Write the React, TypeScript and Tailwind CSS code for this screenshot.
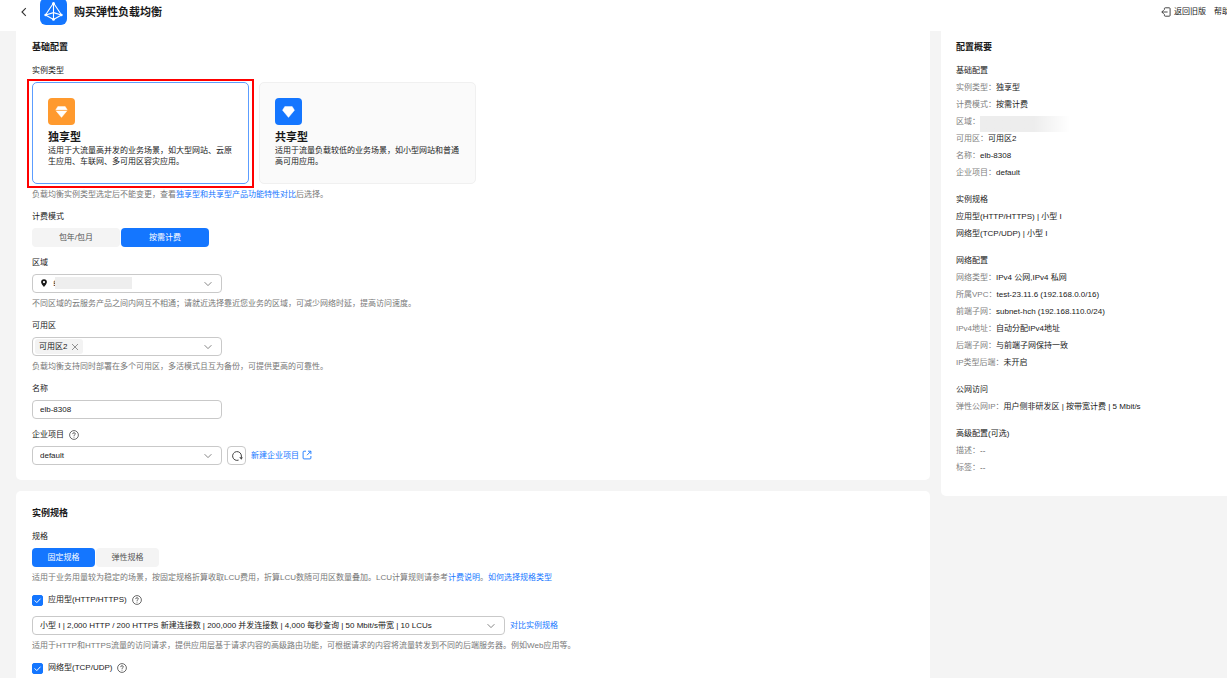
import { useState } from 'react'
import type { ReactNode } from 'react'
import clsx from 'clsx'

type InstanceType = 'dedicated' | 'shared'

const instanceTypes: { id: InstanceType; name: string; description: string }[] = [
  {
    id: 'dedicated',
    name: '独享型',
    description: '适用于大流量高并发的业务场景，如大型网站、云原生应用、车联网、多可用区容灾应用。',
  },
  {
    id: 'shared',
    name: '共享型',
    description: '适用于流量负载较低的业务场景，如小型网站和普通高可用应用。',
  },
]

const summary: { title: string; rows: { label?: string; value: string; masked?: boolean }[] }[] = [
  {
    title: '基础配置',
    rows: [
      { label: '实例类型', value: '独享型' },
      { label: '计费模式', value: '按需计费' },
      { label: '区域', value: '', masked: true },
      { label: '可用区', value: '可用区2' },
      { label: '名称', value: 'elb-8308' },
      { label: '企业项目', value: 'default' },
    ],
  },
  {
    title: '实例规格',
    rows: [{ value: '应用型(HTTP/HTTPS) | 小型 I' }, { value: '网络型(TCP/UDP) | 小型 I' }],
  },
  {
    title: '网络配置',
    rows: [
      { label: '网络类型', value: 'IPv4 公网,IPv4 私网' },
      { label: '所属VPC', value: 'test-23.11.6 (192.168.0.0/16)' },
      { label: '前端子网', value: 'subnet-hch (192.168.110.0/24)' },
      { label: 'IPv4地址', value: '自动分配IPv4地址' },
      { label: '后端子网', value: '与前端子网保持一致' },
      { label: 'IP类型后端', value: '未开启' },
    ],
  },
  {
    title: '公网访问',
    rows: [{ label: '弹性公网IP', value: '用户侧非研发区 | 按带宽计费 | 5 Mbit/s' }],
  },
  {
    title: '高级配置(可选)',
    rows: [
      { label: '描述', value: '--' },
      { label: '标签', value: '--' },
    ],
  },
]

export default function App() {
  const [type, setType] = useState<InstanceType>('dedicated')
  const [billing, setBilling] = useState('按需计费')
  const [spec, setSpec] = useState('固定规格')
  const [zones, setZones] = useState(['可用区2'])
  const [name, setName] = useState('elb-8308')

  return (
    <div className="flex min-h-screen flex-col overflow-hidden bg-[#f4f4f4] font-['Liberation_Sans','Noto_Sans_CJK_SC',sans-serif] text-[8px] leading-3 text-[#191919]">
      <header className="-mt-0.5 flex items-center bg-white pb-1.5 pl-5">
        <button aria-label="返回" className="mr-3">
          <svg viewBox="0 0 8 10" className="h-2.5 w-2" fill="none" stroke="#333" strokeWidth="1.1">
            <path d="M5.8 1.2 2 5l3.8 3.8" />
          </svg>
        </button>
        <ElbLogo />
        <h1 className="ml-[7px] text-[11px] font-bold leading-4">购买弹性负载均衡</h1>
        <nav className="-mr-[3px] ml-auto flex items-center gap-2">
          <a href="#old" className="flex items-center gap-[3px]">
            <svg viewBox="0 0 10 10" className="size-2.5" fill="none" stroke="#333" strokeWidth="0.9">
              <path d="M3.4 2.8V1.6q0-.8.8-.8h4q.9 0 .9.8v6.8q0 .8-.9.8h-4q-.8 0-.8-.8V7.2M6.6 5H.9M2.7 3.1.8 5l1.9 1.9" />
            </svg>
            返回旧版
          </a>
          <a href="#help">帮助</a>
        </nav>
      </header>

      <main className="flex flex-1 items-stretch gap-[11px] pl-4">
        <div className="flex min-w-0 flex-1 flex-col gap-[11px]">
          <section className="flex flex-col gap-2.5 rounded-b-[5px] bg-white px-4 pb-[15px] pt-2">
            <h2 className="text-[9px] font-bold leading-4">基础配置</h2>

            <Field label="实例类型">
              <div className="flex gap-2.5" role="radiogroup" aria-label="实例类型">
                {instanceTypes.map((t) => (
                  <div key={t.id} className="relative w-[217px]">
                    <label
                      className={clsx(
                        'block h-[102px] rounded-[5px] border p-[15px]',
                        type === t.id ? 'border-[#5c9dff] bg-white' : 'border-[#f0f0f0] bg-[#fafafa]',
                      )}
                    >
                      <input
                        type="radio"
                        name="instance-type"
                        className="sr-only"
                        checked={type === t.id}
                        onChange={() => setType(t.id)}
                      />
                      <DiamondIcon id={t.id} />
                      <span className="mt-1 block text-[11px] font-bold leading-4">{t.name}</span>
                      <span className="block leading-[11px]">{t.description}</span>
                    </label>
                    {t.id === 'dedicated' && (
                      <div className="pointer-events-none absolute -inset-x-[5px] -bottom-1 -top-[3px] border-2 border-[#ff0000]" />
                    )}
                  </div>
                ))}
              </div>
              <Hint>
                负载均衡实例类型选定后不能变更，查看<Link>独享型和共享型产品功能特性对比</Link>后选择。
              </Hint>
            </Field>

            <Field label="计费模式">
              <Segmented options={['包年/包月', '按需计费']} value={billing} onChange={setBilling} wide />
            </Field>

            <Field label="区域" htmlFor="region">
              <div className="relative w-[190px]">
                <Select id="region" indent>
                  <option>纟</option>
                </Select>
                <svg
                  viewBox="0 0 8 8"
                  className="pointer-events-none absolute left-2 top-[5px] size-2"
                  fill="#191919"
                  fillRule="evenodd"
                >
                  <path d="M4 .2a2.9 2.9 0 0 0-2.9 2.9C1.1 5 4 8 4 8s2.9-3 2.9-4.9A2.9 2.9 0 0 0 4 .2Zm0 1.8a1.1 1.1 0 1 1 0 2.2 1.1 1.1 0 0 1 0-2.2Z" />
                </svg>
                <div className="pointer-events-none absolute left-[23px] top-[3px] h-3 w-[77px] bg-[#eeeeee]" />
              </div>
              <Hint>不同区域的云服务产品之间内网互不相通；请就近选择靠近您业务的区域，可减少网络时延，提高访问速度。</Hint>
            </Field>

            <Field label="可用区">
              <div className="flex h-[19px] w-[190px] items-center rounded-[4px] border border-[#c9c9c9] pl-0.5 pr-[9px]">
                {zones.map((z) => (
                  <span key={z} className="flex h-[15px] items-center gap-1 rounded-[3px] bg-[#f3f3f3] px-1">
                    {z}
                    <button
                      aria-label={`移除${z}`}
                      onClick={() => setZones(zones.filter((item) => item !== z))}
                    >
                      <svg viewBox="0 0 8 8" className="size-2" stroke="#777" strokeWidth="0.8">
                        <path d="m1 1 6 6M7 1 1 7" />
                      </svg>
                    </button>
                  </span>
                ))}
                <button aria-label="选择可用区" className="ml-auto">
                  <Chevron />
                </button>
              </div>
              <Hint>负载均衡支持同时部署在多个可用区，多活模式且互为备份，可提供更高的可靠性。</Hint>
            </Field>

            <Field label="名称" htmlFor="name">
              <input
                id="name"
                value={name}
                onChange={(e) => setName(e.target.value)}
                className="block h-[19px] w-[190px] rounded-[4px] border border-[#c9c9c9] px-[7px] outline-none"
              />
            </Field>

            <Field label="企业项目" htmlFor="project" help>
              <div className="flex items-center gap-[5px]">
                <div className="relative w-[190px]">
                  <Select id="project">
                    <option>default</option>
                  </Select>
                </div>
                <button
                  aria-label="刷新"
                  className="flex size-[19px] items-center justify-center rounded-[4px] border border-[#c9c9c9]"
                >
                  <svg viewBox="0 0 12 12" className="size-3" fill="none" stroke="#444">
                    <path d="M7.6 10.1A4.4 4.4 0 1 1 10.4 6v1.6" />
                    <path d="M8.2 7.2h3.6l-1.4 2.6Z" fill="#444" stroke="none" />
                  </svg>
                </button>
                <Link>
                  新建企业项目
                  <svg
                    viewBox="0 0 10 10"
                    className="ml-[3px] inline-block size-2.5 align-middle"
                    fill="none"
                    stroke="currentColor"
                    strokeWidth="0.9"
                  >
                    <path d="M4 1.2H2q-.9 0-.9.9V8q0 .9.9.9h6q.9 0 .9-.9V6M6 1.2h2.9v2.9M8.8 1.3 5 5.2" />
                  </svg>
                </Link>
              </div>
            </Field>
          </section>

          <section className="flex flex-1 flex-col gap-2.5 rounded-t-[5px] bg-white px-4 pt-3.5">
            <h2 className="text-[9px] font-bold leading-4">实例规格</h2>

            <Field label="规格">
              <Segmented options={['固定规格', '弹性规格']} value={spec} onChange={setSpec} />
              <Hint>
                适用于业务用量较为稳定的场景，按固定规格折算收取LCU费用，折算LCU数随可用区数量叠加。LCU计算规则请参考
                <Link>计费说明</Link>。<Link>如何选择规格类型</Link>
              </Hint>
            </Field>

            <SpecCheckbox label="应用型(HTTP/HTTPS)" />
            <div className="flex flex-col gap-[5px]">
              <div className="flex items-center gap-[5px]">
                <div className="relative w-[473px]">
                  <Select id="app-spec" label="应用型规格">
                    <option>
                      小型 I | 2,000 HTTP / 200 HTTPS 新建连接数 | 200,000 并发连接数 | 4,000 每秒查询 | 50 Mbit/s带宽 | 10 LCUs
                    </option>
                  </Select>
                </div>
                <Link>对比实例规格</Link>
              </div>
              <Hint>
                适用于HTTP和HTTPS流量的访问请求，提供应用层基于请求内容的高级路由功能，可根据请求的内容将流量转发到不同的后端服务器。例如Web应用等。
              </Hint>
            </div>
            <SpecCheckbox label="网络型(TCP/UDP)" />
          </section>
        </div>

        <aside className="flex w-[286px] flex-col self-start rounded-bl-[5px] bg-white px-[15px] pb-[22px] pt-2">
          <h2 className="mb-2.5 text-[9px] font-bold leading-4">配置概要</h2>
          <div className="flex flex-col gap-[15px]">
            {summary.map((group) => (
              <div key={group.title} className="flex flex-col gap-[5px]">
                <h3>{group.title}</h3>
                {group.rows.map((row) => (
                  <p key={row.label ?? row.value} className="flex h-3 whitespace-nowrap">
                    {row.label && <span className="text-[#808080]">{row.label}：</span>}
                    {row.masked ? (
                      <span className="h-4 w-[90px] bg-linear-to-r from-[#ededed] from-60% to-white" />
                    ) : (
                      <span className={clsx(row.value === '--' && 'text-[#555]')}>{row.value}</span>
                    )}
                  </p>
                ))}
              </div>
            ))}
          </div>
        </aside>
      </main>
    </div>
  )
}

function Field({
  label,
  htmlFor,
  help,
  children,
}: {
  label: string
  htmlFor?: string
  help?: boolean
  children: ReactNode
}) {
  return (
    <div className="flex flex-col gap-[5px]">
      <div className="flex items-center gap-[5px]">
        {htmlFor ? <label htmlFor={htmlFor}>{label}</label> : <span>{label}</span>}
        {help && <HelpIcon />}
      </div>
      {children}
    </div>
  )
}

function Hint({ children }: { children: ReactNode }) {
  return <p className="text-[#777]">{children}</p>
}

function Link({ children }: { children: ReactNode }) {
  return (
    <a href="#link" className="text-[#1476ff]">
      {children}
    </a>
  )
}

function Select({
  id,
  label,
  indent,
  children,
}: {
  id: string
  label?: string
  indent?: boolean
  children: ReactNode
}) {
  return (
    <>
      <select
        id={id}
        aria-label={label}
        className={clsx(
          'block h-[19px] w-full appearance-none rounded-[4px] border border-[#c9c9c9] bg-white pr-5 outline-none',
          indent ? 'pl-5' : 'pl-[7px]',
        )}
      >
        {children}
      </select>
      <span className="pointer-events-none absolute inset-y-0 right-2.5 flex items-center">
        <Chevron />
      </span>
    </>
  )
}

function Segmented({
  options,
  value,
  onChange,
  wide,
}: {
  options: string[]
  value: string
  onChange: (v: string) => void
  wide?: boolean
}) {
  return (
    <div className="flex gap-px">
      {options.map((o) => (
        <button
          key={o}
          aria-pressed={o === value}
          onClick={() => onChange(o)}
          className={clsx(
            'h-[19px] rounded-[4px]',
            wide ? 'w-[88px]' : 'w-[63px]',
            o === value ? 'bg-[#1476ff] text-white' : 'bg-[#f4f4f4] text-[#555]',
          )}
        >
          {o}
        </button>
      ))}
    </div>
  )
}

function SpecCheckbox({ label }: { label: string }) {
  const [checked, setChecked] = useState(true)
  return (
    <div className="flex h-3 items-center gap-[5px]">
      <label className="flex items-center gap-[5px]">
        <span className="relative size-[11px]">
          <input
            type="checkbox"
            checked={checked}
            onChange={(e) => setChecked(e.target.checked)}
            className="block size-[11px] appearance-none rounded-[2px] border border-[#c9c9c9] checked:border-[#1476ff] checked:bg-[#1476ff]"
          />
          {checked && (
            <svg
              viewBox="0 0 11 11"
              className="pointer-events-none absolute inset-0 size-[11px]"
              fill="none"
              stroke="#fff"
            >
              <path d="m2.6 5.4 2.2 2.2 3.7-3.9" />
            </svg>
          )}
        </span>
        {label}
      </label>
      <HelpIcon />
    </div>
  )
}

function Chevron() {
  return (
    <svg viewBox="0 0 8 8" className="size-2" fill="none" stroke="#777" strokeWidth="0.9">
      <path d="M.6 2.2 4 5.6l3.4-3.4" />
    </svg>
  )
}

function HelpIcon() {
  return (
    <svg viewBox="0 0 10 10" className="size-2.5" fill="none" stroke="#444" strokeWidth="0.8">
      <circle cx="5" cy="5" r="4.4" />
      <path d="M3.7 4.1q0-1.4 1.3-1.4t1.3 1.2q0 .6-.7 1-.6.3-.6 1.1M5 6.7v.9" />
    </svg>
  )
}

function ElbLogo() {
  return (
    <svg viewBox="0 0 27 27" className="size-[27px]" fill="none">
      <rect width="27" height="27" rx="6" fill="#1476ff" />
      <path
        d="m13.5 5-8 12 8 4.6 8-4.6ZM13.5 5v16.4M5.7 17l7.8-2.4 7.8 2.4"
        stroke="#fff"
        strokeWidth="1.1"
        strokeLinejoin="round"
      />
      <circle cx="13.5" cy="5.4" r="1.5" fill="#fff" />
      <circle cx="5.6" cy="17" r="1.3" fill="#fff" />
      <circle cx="21.4" cy="17" r="1.3" fill="#fff" />
      <circle cx="13.5" cy="21.4" r="1.4" fill="#fff" />
    </svg>
  )
}

function DiamondIcon({ id }: { id: InstanceType }) {
  return (
    <svg viewBox="0 0 27 27" className="block size-[27px]">
      <rect width="27" height="27" rx="4" fill={id === 'dedicated' ? '#ff9a2e' : '#1476ff'} />
      <path d="M9.8 8.5h7.4l2.3 3.7-6 7.2-6-7.2Z" fill="#fff" stroke="#fff" strokeWidth="0.4" strokeLinejoin="round" />
      {id === 'dedicated' && <path d="M7 12.4h13" stroke="#ff9a2e" strokeWidth="0.8" />}
    </svg>
  )
}
